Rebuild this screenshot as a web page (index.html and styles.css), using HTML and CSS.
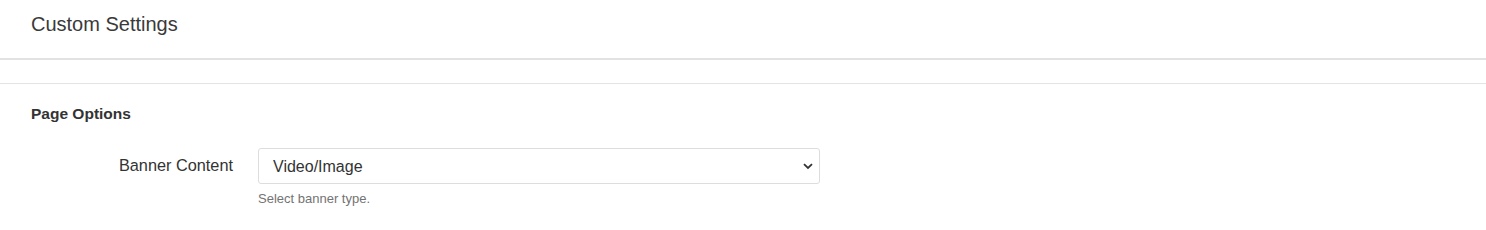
FILE: index.html
```html
<!DOCTYPE html>
<html>
<head>
  <title>Custom Settings</title>
  <link rel="stylesheet" href="styles.css">
</head>
<body>
  <div class="panel-head">
    <h1 class="panel-title">Custom Settings</h1>
  </div>
  <div class="panel-gap"></div>
  <div class="panel-body">
    <h2 class="group-title">Page Options</h2>
    <div class="field">
      <label class="field-label" for="banner">Banner Content</label>
      <div class="field-control">
        <div class="select-wrap">
          <select id="banner" class="select">
            <option>Video/Image</option>
            <option>Slider</option>
            <option>None</option>
          </select>
          <svg class="select-arrow" width="10" height="7" viewBox="0 0 10 7">
            <path d="M1 1.2 L5 5 L9 1.2" fill="none" stroke="#333" stroke-width="1.8"/>
          </svg>
        </div>
        <div class="help">Select banner type.</div>
      </div>
    </div>
  </div>
</body>
</html>
```

FILE: styles.css
```css
body, html {
  margin: 0;
  padding: 0;
  background: #ffffff;
}
body {
  font-family: "Liberation Sans", Arial, sans-serif;
  color: #333333;
}
.panel-head {
  padding: 12px 31px 22px;
  border-bottom: 2px solid #e2e2e2;
}
.panel-title {
  margin: 0;
  font-size: 20px;
  font-weight: normal;
  line-height: 24px;
  color: #3a3a3a;
}
.panel-gap {
  height: 23px;
  border-bottom: 1px solid #e3e3e3;
}
.panel-body {
  padding: 20px 31px;
}
.group-title {
  margin: 0 0 24px;
  font-size: 15.5px;
  font-weight: bold;
  line-height: 20px;
}
.field {
  display: grid;
  grid-template-columns: 202px 562px;
  column-gap: 25px;
}
.field-label {
  text-align: right;
  font-size: 16.3px;
  line-height: 35px;
}
.select-wrap {
  position: relative;
}
.select {
  display: block;
  width: 100%;
  height: 36px;
  margin: 0;
  padding: 0 30px 0 14px;
  border: 1px solid #dddddd;
  border-radius: 3px;
  background: #ffffff;
  font-family: inherit;
  font-size: 16px;
  color: #333333;
  appearance: none;
  -webkit-appearance: none;
  outline: none;
}
.select-arrow {
  position: absolute;
  right: 7px;
  top: 15px;
  pointer-events: none;
}
.help {
  margin-top: 7px;
  font-size: 13px;
  line-height: 16px;
  color: #737373;
}
```
